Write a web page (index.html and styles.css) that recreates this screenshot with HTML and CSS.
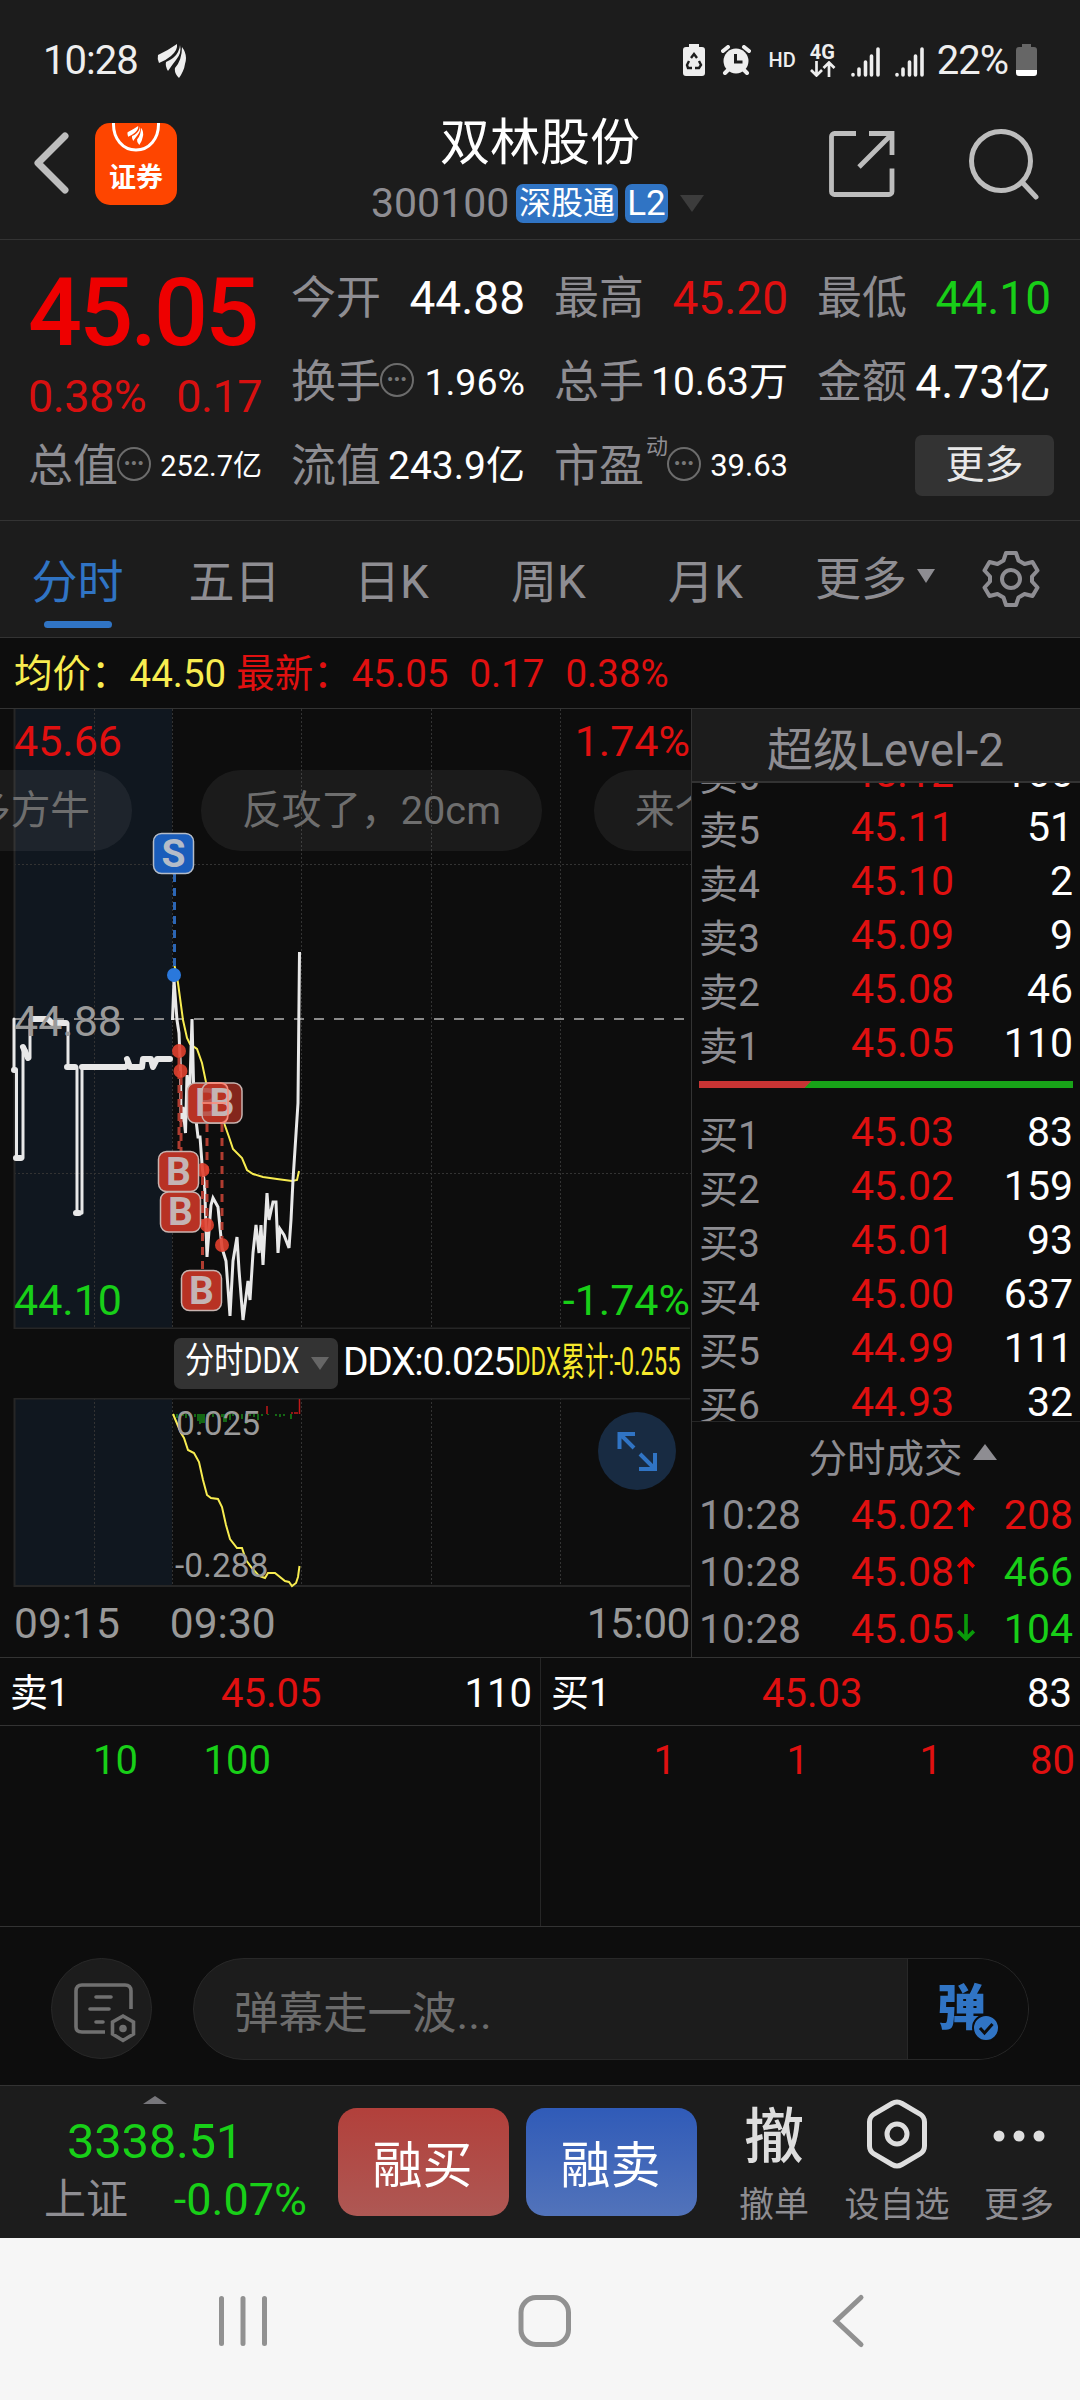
FILE: index.html
```html
<!DOCTYPE html>
<html lang="zh-CN">
<head>
  <meta charset="UTF-8">
  <meta name="viewport" content="width=device-width, initial-scale=1.0">
  <title>双林股份 300100</title>
  <link rel="stylesheet" href="styles.css">
</head>
<body>

<!-- 状态栏 -->
<div class="status">
  <span class="clock">10:28</span>
  <svg class="st-brand" width="30" height="34" viewBox="0 0 30 34" fill="#eee">
    <path d="M1 11Q10 7 20 0Q21 6 14 12Q8 17 2 19Q0 15 1 11Z"/>
    <path d="M23 1Q25 9 19 16Q15 21 11 27Q8 22 9 18Q18 14 21 8Q23 4 23 1Z"/>
    <path d="M25 3Q31 11 28 20Q27 27 22 34Q17 29 18 24Q25 16 25 3Z"/>
  </svg>
  <div class="st-icons">
    <svg class="i-saver" width="22" height="32" viewBox="0 0 22 32">
      <path d="M6 0h10v3h3q3 0 3 3v23q0 3-3 3H3q-3 0-3-3V6q0-3 3-3h3z" fill="#eee"/>
      <path d="M8 14l3-4 3 4M16 17l2 4-2 3h-4M6 17l-2 4 1 3h4" fill="none" stroke="#1c1c1c" stroke-width="2.4"/>
    </svg>
    <svg class="i-alarm" width="30" height="30" viewBox="0 0 30 30">
      <circle cx="15" cy="16" r="12.5" fill="#eee"/>
      <path d="M2 6l5-4M28 6l-5-4M4 28l4-4M26 28l-4-4" stroke="#eee" stroke-width="4" stroke-linecap="round"/>
      <path d="M14.500 9v8h7" fill="none" stroke="#1c1c1c" stroke-width="3"/>
    </svg>
    <span class="hd">HD</span>
    <div class="net">
      <span>4G</span>
      <svg width="26" height="16" viewBox="0 0 26 16" fill="none" stroke="#eee" stroke-width="2.700"><path d="M6.500 0v14M1 9l5.500 5.500L12 9M19 16V2M13.500 7L19 1.500 24.500 7"/></svg>
    </div>
    <svg class="i-sig" width="29" height="30" viewBox="0 0 29 30" stroke="#eee" stroke-width="3.600" stroke-linecap="round"><path d="M2 27.500v.5M8 22v6M14.500 15v13M20.500 9v19M27 2v26"/></svg>
    <svg class="i-sig2" width="29" height="30" viewBox="0 0 29 30" stroke="#eee" stroke-width="3.600" stroke-linecap="round"><path d="M2 27.500v.5M8 22v6M14.500 15v13M20.500 9v19M27 2v26"/></svg>
    <span class="pct">22%</span>
    <svg class="i-bat" width="21" height="32" viewBox="0 0 21 32">
      <path d="M6 0h9v3h3q3 0 3 3v20H0V6q0-3 3-3h3z" fill="#666"/>
      <path d="M0 26h21v3q0 3-3 3H3q-3 0-3-3z" fill="#fff"/>
    </svg>
  </div>
</div>

<!-- 标题栏 -->
<header class="head">
  <svg class="back" width="40" height="68" viewBox="0 0 40 68" fill="none" stroke="#bdbdbd" stroke-width="7" stroke-linecap="round" stroke-linejoin="round"><path d="M35 7L8 34l27 27"/></svg>
  <div class="logo">
    <svg width="82" height="30" viewBox="0 0 82 30">
      <path d="M18.500 0C18 16 28 27 41 27S64 16 63.500 0" fill="none" stroke="#fff" stroke-width="3"/>
      <g fill="#fff" transform="translate(32 3) scale(.56)">
        <path d="M1 11Q10 7 20 0Q21 6 14 12Q8 17 2 19Q0 15 1 11Z"/>
        <path d="M23 1Q25 9 19 16Q15 21 11 27Q8 22 9 18Q18 14 21 8Q23 4 23 1Z"/>
        <path d="M25 3Q31 11 28 20Q27 27 22 34Q17 29 18 24Q25 16 25 3Z"/>
      </g>
    </svg>
    <span>证券</span>
  </div>
  <div class="title">
    <div class="name">双林股份</div>
    <div class="code"><span>300100</span><b>深股通</b><b class="l2">L2</b><i class="tri"></i></div>
  </div>
  <svg class="share" width="68" height="68" viewBox="0 0 68 68" fill="none" stroke="#bdbdbd" stroke-width="4.800"><path d="M28 3.500H6.500a3 3 0 0 0-3 3V61.500a3 3 0 0 0 3 3H61a3 3 0 0 0 3-3V38.500M41 3.500H64V25M63 5L31 37" stroke-linejoin="miter"/></svg>
  <svg class="search" width="72" height="72" viewBox="0 0 72 72" fill="none" stroke="#bdbdbd" stroke-width="5"><circle cx="33" cy="33" r="29.500"/><path d="M54 54L68 69" stroke-linecap="round"/></svg>
</header>

<!-- 行情数据 -->
<section class="quote">
  <div class="price">
    <div class="now">45.05</div>
    <div class="chg"><span>0.38%</span><span>0.17</span></div>
  </div>
  <div class="cell"><label>今开</label><span class="v46">44.88</span></div>
  <div class="cell"><label>最高</label><span class="v46 red">45.20</span></div>
  <div class="cell"><label>最低</label><span class="v46 green">44.10</span></div>
  <div class="cell"><label>换手<i class="info">•••</i></label><span class="v38">1.96%</span></div>
  <div class="cell"><label>总手</label><span class="v40">10.63万</span></div>
  <div class="cell"><label>金额</label><span class="v46">4.73亿</span></div>
  <div class="cell"><label>总值<i class="info">•••</i></label><span class="v30">252.7亿</span></div>
  <div class="cell"><label>流值</label><span class="v40">243.9亿</span></div>
  <div class="cell"><label>市盈<sup>动</sup><i class="info">•••</i></label><span class="v32">39.63</span></div>
  <div class="cell"><button class="more">更多</button></div>
</section>

<!-- 周期切换 -->
<nav class="tabs">
  <a class="on">分时</a><a>五日</a><a>日K</a><a>周K</a><a>月K</a>
  <a class="drop">更多<i></i></a>
  <svg width="60" height="60" viewBox="0 0 60 60" fill="none" stroke="#8e8d92" stroke-width="4" stroke-linejoin="round">
    <path d="M25 4h10l2.500 7.500 6 3.500 8-2 5 8.500-5.500 6v5l5.500 6-5 8.500-8-2-6 3.500L35 56H25l-2.500-7.500-6-3.500-8 2-5-8.500 5.500-6v-5l-5.500-6 5-8.500 8 2 6-3.500z"/>
    <circle cx="30" cy="30" r="9"/>
  </svg>
</nav>

<div class="avg">
  <span class="yellow">均价：44.50</span>
  <span class="red">最新：45.05</span><span class="red">0.17</span><span class="red">0.38%</span>
</div>

<main class="main">
  <div class="chart">
    <!-- 分时走势 -->
    <svg class="trend" width="691" height="620" viewBox="0 709 691 620">
      <rect x="14" y="709" width="158" height="620" fill="#10171f"/>
      <g class="grid">
        <path d="M94.500 709V1328M172.500 709V1328M301.500 709V1328M431.500 709V1328M560.500 709V1328M14 864.500H691M14 1173.500H691"/>
      </g>
      <path class="frame" d="M14.500 709V1328.500H690"/>
      <path d="M14 1019H691" stroke="#8a8a8a" stroke-width="2" stroke-dasharray="10 10"/>
      <g class="pill">
        <rect x="-150" y="770" width="282" height="81" rx="40"/>
        <rect x="201" y="770" width="341" height="81" rx="40"/>
        <rect x="594" y="770" width="200" height="81" rx="40"/>
        <text x="-29" y="824">多方牛</text>
        <text x="242" y="824">反攻了，20cm</text>
        <text x="635" y="824">来个</text>
      </g>
      <g fill="none" stroke="#e8e8e8" stroke-linejoin="round" stroke-linecap="round">
        <path stroke-width="3" d="M14 1019V1070H16.500V1158H23V1047L26 1050 27 1058H30V1019H48L52 1023H68V1067H77V1213H82V1067H126L127 1059 130 1067H143V1059H151L153 1067 157 1059H171"/>
        <path stroke-width="6" d="M14 1070H15M16 1158H21M23 1047L28 1058M32 1019H48L52 1023H66M67 1067H75M76 1213H79M82 1067H125M127 1059L130 1067H142L143 1059H151L153 1067 157 1059H170"/>
      </g>
      <path class="avgline" d="M174 963L178 983 183 1020 187 1038 190 1044 197 1049 202 1063 207 1087 213 1103 223 1120 229 1137 233 1149 242 1158 247 1170 253 1174 263 1177 277 1179 292 1181 297 1180 299 1171"/>
      <path fill="none" stroke="#e8e8e8" stroke-width="3" d="M172.500 1020L174 980 177 1020 179 1033 180.500 1070 181 1122 183 1107 185.500 1133 187 1075 189 1113 192 1019 194 1103 198 1137H200L202.500 1170 204.500 1183 207 1257 211 1205 213 1198 218 1207 222 1248 226 1261 230 1316 233 1261 237 1237 239 1270 243 1320 248 1281 250 1300 253 1253 256 1225 259 1253 261 1225 263 1265 267 1193 269 1220 273 1202H276L278 1253 280 1229 284 1235 289 1248 291 1220 293 1180 298 1103 299.500 952"/>
      <path d="M174.500 874V966" stroke="#2c66b4" stroke-width="3" stroke-dasharray="8 6"/>
      <path d="M179 1057V1151M181 1077V1192M207 1124V1218M222 1124V1238M202.500 1177V1270" stroke="#b03c30" stroke-width="3" stroke-dasharray="8 6"/>
      <circle cx="174" cy="975" r="7" fill="#2a78dc"/>
      <g fill="#e0402e" opacity=".9">
        <circle cx="179" cy="1051" r="7"/><circle cx="180.500" cy="1071" r="7"/><circle cx="202.500" cy="1170" r="7"/><circle cx="207" cy="1225" r="7"/><circle cx="222" cy="1245" r="7"/>
      </g>
      <g class="mark sell"><rect x="153.500" y="833.500" width="40" height="40" rx="8"/><text x="173.500" y="867">S</text></g>
      <g class="mark">
        <rect x="187.500" y="1083" width="40" height="40" rx="8"/><text x="207.500" y="1116">B</text>
        <rect x="202" y="1083" width="40" height="40" rx="8" fill-opacity=".7"/><text x="222" y="1116">B</text>
        <rect x="158.500" y="1151.500" width="40" height="40" rx="8"/><text x="178.500" y="1185">B</text>
        <rect x="160.500" y="1192" width="40" height="40" rx="8"/><text x="180.500" y="1225">B</text>
        <rect x="181.500" y="1270.500" width="40" height="40" rx="8"/><text x="201.500" y="1304">B</text>
      </g>
      <path d="M207 1083h13q8 0 8 8v24q0 8-8 8M202 1103h24" fill="none" stroke="#ff8a78" stroke-width="1.500"/>
      <g class="scale">
        <text x="14" y="756" fill="#e01010">45.66</text>
        <text x="690" y="756" fill="#e01010" text-anchor="end">1.74%</text>
        <text x="14" y="1036" fill="#9a9a9a">44.88</text>
        <text x="14" y="1315" fill="#18cf18">44.10</text>
        <text x="690" y="1315" fill="#18cf18" text-anchor="end">-1.74%</text>
      </g>
    </svg>
    <div class="legend">
      <div class="pick"><span>分时DDX</span><i></i></div>
      <span class="ddx">DDX:0.025</span>
      <span class="sum"><span>DDX累计:-0.255</span></span>
    </div>
    <!-- DDX 副图 -->
    <svg class="sub" width="691" height="190" viewBox="0 1398 691 190">
      <rect x="14" y="1398" width="158" height="188" fill="#10171f"/>
      <path class="grid" d="M94.500 1398V1586M172.500 1398V1586M301.500 1398V1586M431.500 1398V1586M560.500 1398V1586"/>
      <path class="frame" d="M690 1398.500H14.500V1586H690"/>
      <path stroke="#1a9a1a" stroke-width="1.300" d="M174 1414V1416M177 1414V1418M180 1414V1417M183 1414V1416M186 1414V1418M189 1414V1416M195 1414V1417M198 1414V1421M200 1414V1424M202 1414V1423M204 1414V1423M207 1414V1416M213 1414V1417M217 1414V1415M222 1414V1417M224 1414V1422M226 1414V1422M230 1414V1420M233 1414V1416M238 1414V1418M242 1414V1419M246 1414V1424M250 1414V1416M254 1414V1417M258 1414V1420M262 1414V1416M268 1414V1415M276 1414V1416M280 1414V1417M284 1414V1416M291 1414V1419"/>
      <path stroke="#c01818" stroke-width="1.500" d="M267 1406V1414M299.500 1399V1414M292 1412V1414M295 1412V1414M297 1412V1414"/>
      <path class="avgline" d="M173 1414L181 1433 184 1438 188 1450 194 1453 199 1462 203 1480 207 1495 211 1498 218 1499 222 1507 226 1525 230 1539 237 1548H242L246 1560 252 1568 259 1576 265 1578 268 1573H275L285 1581 289 1582 292 1586 296 1583 298 1577 299.500 1566"/>
      <g class="small"><text x="176" y="1435">0.025</text><text x="175" y="1577">-0.288</text></g>
      <circle cx="637" cy="1451" r="39" fill="#182b42"/>
      <path d="M619.500 1449V1434H635M620 1434L634 1448M655 1453V1469H639M654 1468L640 1454" fill="none" stroke="#3074c4" stroke-width="4"/>
    </svg>
    <div class="axis"><span>09:15</span><span>09:30</span><span>15:00</span></div>
  </div>

  <!-- 盘口 -->
  <aside class="side">
    <div class="lv2">超级Level-2</div>
    <div class="book">
      <div class="row"><em>卖6</em><b>45.12</b><span>166</span></div>
      <div class="row"><em>卖5</em><b>45.11</b><span>51</span></div>
      <div class="row"><em>卖4</em><b>45.10</b><span>2</span></div>
      <div class="row"><em>卖3</em><b>45.09</b><span>9</span></div>
      <div class="row"><em>卖2</em><b>45.08</b><span>46</span></div>
      <div class="row"><em>卖1</em><b>45.05</b><span>110</span></div>
      <div class="ratio"></div>
      <div class="row"><em>买1</em><b>45.03</b><span>83</span></div>
      <div class="row"><em>买2</em><b>45.02</b><span>159</span></div>
      <div class="row"><em>买3</em><b>45.01</b><span>93</span></div>
      <div class="row"><em>买4</em><b>45.00</b><span>637</span></div>
      <div class="row"><em>买5</em><b>44.99</b><span>111</span></div>
      <div class="row"><em>买6</em><b>44.93</b><span>32</span></div>
    </div>
    <div class="deal-title">分时成交<i></i></div>
    <div class="deal"><em>10:28</em><b>45.02</b><svg width="20" height="27" viewBox="0 0 18 26" stroke="#e60000"><path d="M9 26V2M1.500 9.500L9 2l7.500 7.500"/></svg><span class="red">208</span></div>
    <div class="deal"><em>10:28</em><b>45.08</b><svg width="20" height="27" viewBox="0 0 18 26" stroke="#e60000"><path d="M9 26V2M1.500 9.500L9 2l7.500 7.500"/></svg><span class="green">466</span></div>
    <div class="deal"><em>10:28</em><b>45.05</b><svg width="20" height="27" viewBox="0 0 18 26" stroke="#0a9a0a"><path d="M9 0V24M1.500 16.500L9 24l7.500-7.500"/></svg><span class="green">104</span></div>
  </aside>
</main>

<!-- 委托队列 -->
<section class="queue">
  <div class="q">
    <div class="q-head"><em>卖1</em><b>45.05</b><span>110</span></div>
    <div class="q-body green"><span>10</span><span>100</span></div>
  </div>
  <div class="q">
    <div class="q-head"><em>买1</em><b>45.03</b><span>83</span></div>
    <div class="q-body red"><span>1</span><span>1</span><span>1</span><span>80</span></div>
  </div>
</section>

<!-- 弹幕 -->
<div class="danmu">
  <div class="set">
    <svg width="64" height="62" viewBox="0 0 64 62" fill="none" stroke="#707070" stroke-width="3.600" stroke-linecap="round">
      <path d="M58 27V9q0-6-6-6H9Q3 3 3 9v36q0 5 6 5H32" stroke-linecap="butt"/>
      <path d="M23 15h15M17 27h19M23 40h7"/>
      <path d="M50 34l10.500 6v12L50 58.500 39.500 52V40z"/>
      <circle cx="50" cy="46.500" r="2"/>
    </svg>
  </div>
  <div class="input"><span>弹幕走一波...</span>
    <div class="send">弹
      <svg width="28" height="28" viewBox="0 0 28 28"><circle cx="14" cy="14" r="13" fill="#3074c4" stroke="#0d0d0d" stroke-width="2"/><path d="M8 14l4.500 5 8-9" fill="none" stroke="#0d0d0d" stroke-width="3"/></svg>
    </div>
  </div>
</div>

<!-- 底部交易栏 -->
<footer class="foot">
  <div class="index">
    <i></i>
    <div class="pt">3338.51</div>
    <div class="ix"><span>上证</span><b>-0.07%</b></div>
  </div>
  <button class="trade buyin">融买</button>
  <button class="trade sellout">融卖</button>
  <div class="act a1"><div class="ico">撤</div><span>撤单</span></div>
  <div class="act a2"><div class="ico">
    <svg width="62" height="70" viewBox="0 0 62 70" fill="none" stroke="#dedede" stroke-width="5"><path d="M26 4.500q5-3 10 0L54 15q4.500 3 4.500 8V47q0 5-4.500 8L36 65.500q-5 3-10 0L8 55q-4.500-3-4.500-8V23q0-5 4.500-8z"/><circle cx="31" cy="35" r="10"/></svg>
  </div><span>设自选</span></div>
  <div class="act a3"><div class="ico">
    <svg width="54" height="70" viewBox="0 0 54 70" fill="#dedede"><circle cx="7" cy="37" r="5.500"/><circle cx="27" cy="37" r="5.500"/><circle cx="47" cy="37" r="5.500"/></svg>
  </div><span>更多</span></div>
</footer>

<!-- 系统导航 -->
<div class="sysnav">
  <svg width="1080" height="162" viewBox="0 0 1080 162" fill="none" stroke="#919191" stroke-width="5" stroke-linecap="round">
    <path d="M221.500 60.500V105.500M243 60.500V105.500M264.500 60.500V105.500"/>
    <rect x="521" y="59.500" width="47.500" height="47" rx="15"/>
    <path d="M861 59.500L836 83l25 23.500" stroke-linejoin="miter"/>
  </svg>
</div>

</body>
</html>
```
FILE: styles.css
```css
/* 全局 */
* {
  box-sizing: border-box;
}
body {
  margin: 0;
  width: 1080px;
  height: 2400px;
  overflow: hidden;
  background: #0d0d0d;
  color: #fff;
  font-family: Roboto, "Noto Sans CJK SC", sans-serif;
}
em, i, b {
  font-style: normal;
  font-weight: 400;
}
svg {
  display: block;
  flex: none;
}
button {
  border: none;
  padding: 0;
  font-family: inherit;
}
.red { color: #e01010; }
.green { color: #18cf18; }
.yellow { color: #f7ec50; }

/* 状态栏 */
.status {
  display: flex;
  align-items: center;
  height: 120px;
  padding: 0 43px 0 43px;
  background: #1c1c1c;
  color: #eee;
}
.clock, .pct {
  font-size: 40px;
  line-height: 120px;
  letter-spacing: -1px;
  padding-top: 2px;
}
.clock { width: 114px; }
.st-brand { margin-top: 2px; }
.st-icons {
  display: flex;
  align-items: center;
  margin-left: auto;
}
.hd {
  margin-left: 17px;
  font-size: 20px;
  font-weight: 500;
}
.net {
  width: 26px;
  margin: 0 15px 0 14px;
  font-size: 20px;
  font-weight: 700;
  line-height: 18px;
}
.i-alarm { margin-left: 16px; }
.i-sig { margin-top: 4px; }
.i-sig2 { margin: 4px 13px 0 15px; }
.i-bat { margin-left: 8px; }

/* 标题栏 */
.head {
  display: flex;
  height: 120px;
  background: #1c1c1c;
  border-bottom: 1px solid #333;
}
.back { margin: 9px 0 0 30px; }
.logo {
  width: 82px;
  height: 82px;
  margin: 3px 0 0 25px;
  border-radius: 15px;
  background: #fe4500;
  overflow: hidden;
  text-align: center;
  font: 700 27px/45px "Noto Sans CJK SC", sans-serif;
}
.title {
  width: 350px;
  margin-left: 190px;
}
.name {
  padding-left: 73px;
  font-size: 50px;
  line-height: 46px;
}
.code {
  display: flex;
  align-items: center;
  height: 74px;
  padding-left: 4px;
}
.code span {
  width: 145px;
  font-size: 41px;
  color: #8e8d92;
}
.code b {
  width: 102px;
  height: 39px;
  border-radius: 7px;
  background: #3074c4;
  text-align: center;
  font-size: 32px;
  line-height: 38px;
}
.code b.l2 {
  width: 43px;
  margin-left: 7px;
  font-size: 35px;
  line-height: 39px;
}
.tri {
  margin-left: 12px;
  border: 12px solid transparent;
  border-top: 17px solid #3c3c3c;
  border-bottom: none;
}
.share { margin: 10px 0 0 111px; }
.search { margin: 8px 0 0 72px; }

/* 行情数据 */
.quote {
  display: grid;
  grid-template-columns: 234px 234px 234px 234px;
  grid-template-rows: 84px 84px 84px;
  column-gap: 29px;
  height: 280px;
  padding: 16px 0 0 28px;
  background: #1c1c1c;
}
.price {
  grid-row: span 2;
  color: #ee0000;
}
.now {
  font-size: 95px;
  font-weight: 500;
  line-height: 114px;
  letter-spacing: -2.800px;
}
.chg {
  display: flex;
  justify-content: space-between;
  font-size: 45px;
  line-height: 54px;
  color: #d81010;
  letter-spacing: -.5px;
}
.cell {
  display: flex;
  align-items: center;
  justify-content: space-between;
  line-height: 84px;
  white-space: nowrap;
}
.cell label {
  display: flex;
  align-items: center;
  padding-top: 1px;
  font-size: 45px;
  color: #8e8d92;
}
.info {
  width: 34px;
  height: 34px;
  margin: -5px 0 0 -1px;
  border: 2.5px solid #6c6c6c;
  border-radius: 50%;
  text-align: center;
  font: 15px/28px "Liberation Sans", sans-serif;
  color: #777;
  letter-spacing: 1.500px;
  text-indent: 1px;
}
sup {
  align-self: flex-start;
  margin-left: 2px;
  font-size: 22px;
  line-height: 43px;
}
.v46 { font-size: 46px; }
.v40 { font-size: 39px; }
.v38 { font-size: 37.500px; }
.v32 { font-size: 31px; }
.v30 { font-size: 29px; }
.more {
  width: 139px;
  height: 61px;
  margin: -1px -3px 0 auto;
  border-radius: 7px;
  background: #333;
  color: #e8e8e8;
  font-size: 39px;
  line-height: 59px;
}

/* 周期切换 */
.tabs {
  display: flex;
  height: 118px;
  background: #1c1c1c;
  border-top: 1px solid #333;
  border-bottom: 1px solid #333;
  font-size: 46px;
  line-height: 123px;
  color: #8e8d92;
}
.tabs a {
  position: relative;
  width: 157px;
  padding-right: 2px;
  text-align: center;
}
.tabs .on { color: #3074c4; }
.tabs .on::after {
  content: "";
  position: absolute;
  left: 44px;
  bottom: 9px;
  width: 68px;
  height: 7px;
  border-radius: 4px;
  background: #3074c4;
}
.tabs .drop {
  display: flex;
  align-items: center;
  width: 166px;
  margin-left: 30px;
}
.drop i {
  margin: -6px 0 0 10px;
  border: 9px solid transparent;
  border-top: 14px solid #8e8d92;
  border-bottom: none;
}
.tabs svg {
  margin-top: 28px;
}

.avg {
  display: flex;
  height: 71px;
  padding-left: 14px;
  border-bottom: 1px solid #333;
  font-size: 38.500px;
  line-height: 72px;
}
.avg .yellow { margin-right: 10px; }
.avg .red { margin-right: 21px; }

/* 分时图 */
.main {
  display: flex;
  height: 949px;
  border-bottom: 1px solid #333;
}
.chart { width: 691px; }
.grid {
  fill: none;
  stroke: #333;
  stroke-dasharray: 2 2;
}
.frame {
  fill: none;
  stroke: #262626;
  stroke-width: 2;
}
.avgline {
  fill: none;
  stroke: #f7ec50;
  stroke-width: 2;
}
.pill rect {
  fill: rgba(255, 255, 255, .06);
}
.pill text {
  fill: #6e6e6e;
  font-size: 39.700px;
}
.mark rect {
  fill: #b83224;
  stroke: #c8b4b0;
  stroke-width: 1.500px;
}
.mark text {
  fill: #c4b4b4;
  font-size: 39px;
  font-weight: 700;
  text-anchor: middle;
}
.sell rect { fill: #1a5dbb; stroke: #b4bcc8; }
.sell text { fill: #b4bcc8; }
.scale { font-size: 43px; }
.small {
  font-size: 33.500px;
  fill: #9a9a9a;
}
.legend {
  display: flex;
  align-items: center;
  height: 69px;
  padding-left: 174px;
  line-height: 64px;
  white-space: nowrap;
}
.pick {
  display: flex;
  align-items: center;
  width: 164px;
  height: 51px;
  margin-top: -1px;
  padding-left: 11px;
  border-radius: 7px;
  background: #333;
  font-size: 36px;
}
.pick span {
  width: 126px;
  height: 68px;
  transform: scaleX(.81);
  transform-origin: 0 50%;
}
.pick i {
  border: 9px solid transparent;
  border-top: 13px solid #666;
  border-bottom: none;
}
.ddx {
  width: 177px;
  height: 68px;
  padding-left: 5px;
  font-size: 39px;
  letter-spacing: -1.300px;
}
.sum {
  width: 168px;
  height: 68px;
  color: #f7e92c;
  font-size: 39px;
}
.sum span {
  display: block;
  width: 270px;
  transform: scaleX(.61);
  transform-origin: 0 50%;
}
.axis {
  display: flex;
  padding: 0 1px 0 14px;
  font-size: 42.500px;
  line-height: 72px;
  color: #999;
}
.axis span:nth-child(2) { margin-left: 50px; }
.axis span:nth-child(3) { margin-left: auto; letter-spacing: -.5px; }

/* 盘口 */
.side {
  width: 389px;
  border-left: 1px solid #333;
}
.lv2 {
  height: 74px;
  padding-right: 1px;
  background: #1c1c1c;
  border-bottom: 2px solid #333;
  text-align: center;
  font-size: 46px;
  line-height: 82px;
  color: #8e8d92;
}
.book {
  height: 638px;
  padding: 0 7px;
  overflow: hidden;
}
.row:first-child { margin-top: -37px; }
.row, .deal {
  display: flex;
  height: 54px;
  font-size: 41px;
  line-height: 54px;
}
.row em {
  width: 152px;
  padding-top: 4px;
  font-size: 39px;
  color: #8e8d92;
}
.row b, .deal b, .q-head b { color: #e01010; }
.row span, .deal span { margin-left: auto; }
.ratio {
  height: 7px;
  margin: 11px 0 17px;
  background: linear-gradient(135deg, #c83434 79px, #18a318 80px);
}
.deal-title {
  display: flex;
  align-items: center;
  justify-content: center;
  height: 66px;
  border-top: 1px solid #262626;
  padding-left: 33px;
  font-size: 38.500px;
  color: #8e8d92;
}
.deal-title i {
  margin: -6px 0 0 10px;
  border: 12px solid transparent;
  border-bottom: 16px solid #8e8d92;
  border-top: none;
}
.deal {
  height: 57px;
  padding: 0 7px;
  line-height: 57px;
}
.deal em {
  width: 152px;
  color: #8e8d92;
}
.deal svg {
  margin: 13px 0 0 2px;
  fill: none;
  stroke-width: 3.500px;
}

/* 委托队列 */
.queue {
  display: flex;
  height: 269px;
  border-bottom: 1px solid #333;
}
.q { width: 540px; }
.q + .q { border-left: 1px solid #262626; }
.q-head {
  display: flex;
  height: 68px;
  padding: 0 8px 0 10px;
  border-bottom: 1px solid #333;
  font-size: 40px;
  line-height: 71px;
}
.q-head em { width: 211px; font-size: 38px; }
.q-head span { margin-left: auto; }
.q-body {
  display: grid;
  grid-template-columns: repeat(4, 133px);
  padding-left: 5px;
  font-size: 40px;
  line-height: 69px;
  text-align: right;
}
.q + .q .q-body { padding-left: 2px; }

/* 弹幕 */
.danmu {
  display: flex;
  height: 158px;
  padding: 31px 0 0 51px;
}
.set {
  width: 101px;
  height: 101px;
  padding: 23px 0 0 21px;
  border: 1px solid #282828;
  border-radius: 50%;
  background: #1c1c1c;
}
.input {
  display: flex;
  justify-content: space-between;
  width: 836px;
  height: 102px;
  margin-left: 41px;
  padding-left: 40px;
  border: 1px solid #282828;
  border-radius: 51px;
  background: #1c1c1c;
  overflow: hidden;
  font-size: 44.500px;
  line-height: 110px;
  color: #6c6c6c;
}
.send {
  position: relative;
  width: 121px;
  padding-left: 29px;
  border-left: 1px solid #282828;
  background: #0d0d0d;
  color: #3074c4;
  font-size: 49px;
  font-weight: 900;
  line-height: 99px;
}
.send svg {
  position: absolute;
  left: 64px;
  top: 55px;
}

/* 底部交易栏 */
.foot {
  display: flex;
  height: 153px;
  background: #1c1c1c;
  border-top: 1px solid #333;
}
.index {
  width: 338px;
  color: #18cf18;
}
.index > i {
  display: block;
  width: 0;
  margin: 10px 0 0 143px;
  border: 12px solid transparent;
  border-bottom: 8px solid #77767b;
  border-top: none;
}
.pt {
  padding-left: 67px;
  font-size: 49px;
  line-height: 76px;
  letter-spacing: -.3px;
}
.ix {
  display: flex;
  padding: 0 31px 0 44px;
  justify-content: space-between;
  line-height: 39px;
}
.ix span {
  font-size: 42px;
  color: #8e8d92;
}
.ix b { font-size: 45px; }
.trade {
  width: 171px;
  height: 108px;
  margin: 22px 17px 0 0;
  padding-right: 2px;
  border-radius: 19px;
  color: #fff;
  font-size: 50px;
  line-height: 117px;
}
.buyin { background: linear-gradient(#b2403b, #ae5854); }
.sellout { background: linear-gradient(#305bb8, #5273ba); }
.act {
  text-align: center;
  font-size: 35px;
  color: #8e8d92;
}
.ico {
  display: flex;
  justify-content: center;
  height: 70px;
  margin-top: 13px;
  font-size: 60px;
  font-weight: 500;
  line-height: 78px;
  color: #dedede;
}
.act span {
  display: block;
  line-height: 73px;
}
.a1 { width: 72px; margin-left: 24px; }
.a2 { width: 106px; margin-left: 34px; }
.a3 { width: 72px; margin-left: 33px; }

.sysnav {
  height: 162px;
  background: #f6f6f6;
}
```
